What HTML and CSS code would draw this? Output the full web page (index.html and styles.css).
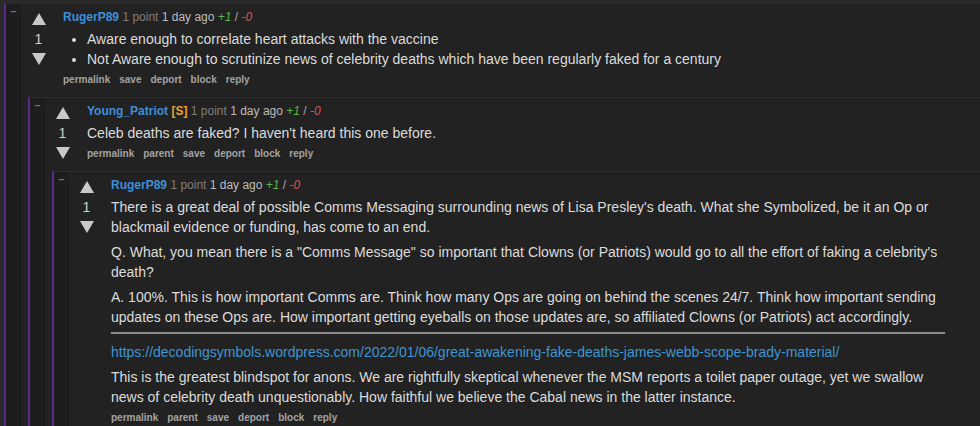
FILE: index.html
```html
<!DOCTYPE html>
<html>
<head>
<meta charset="utf-8">
<link rel="stylesheet" href="styles.css">
</head>
<body>
<div class="comment">
  <div class="gutter"><span class="collapse">–</span></div>
  <div class="main">
    <div class="row">
      <div class="vote"><span class="up"></span><span class="score">1</span><span class="down"></span></div>
      <div class="entry">
        <div class="tagline"><span class="author">RugerP89</span> <span class="points">1 point</span> <span class="time">1 day ago</span> <span class="plus">+1</span> <span class="slash">/</span> <span class="minus">-0</span></div>
        <div class="md">
          <ul>
            <li>Aware enough to correlate heart attacks with the vaccine</li>
            <li>Not Aware enough to scrutinize news of celebrity deaths which have been regularly faked for a century</li>
          </ul>
        </div>
        <div class="actions"><span>permalink</span><span>save</span><span>deport</span><span>block</span><span>reply</span></div>
      </div>
    </div>
    <div class="children">
      <div class="comment">
        <div class="gutter"><span class="collapse">–</span></div>
        <div class="main">
          <div class="row">
            <div class="vote"><span class="up"></span><span class="score">1</span><span class="down"></span></div>
            <div class="entry">
              <div class="tagline"><span class="author">Young_Patriot</span> <span class="submitter">[S]</span> <span class="points">1 point</span> <span class="time">1 day ago</span> <span class="plus">+1</span> <span class="slash">/</span> <span class="minus">-0</span></div>
              <div class="md">
                <p>Celeb deaths are faked? I haven't heard this one before.</p>
              </div>
              <div class="actions"><span>permalink</span><span>parent</span><span>save</span><span>deport</span><span>block</span><span>reply</span></div>
            </div>
          </div>
          <div class="children">
            <div class="comment">
              <div class="gutter"><span class="collapse">–</span></div>
              <div class="main">
                <div class="row">
                  <div class="vote"><span class="up"></span><span class="score">1</span><span class="down"></span></div>
                  <div class="entry">
                    <div class="tagline"><span class="author">RugerP89</span> <span class="points">1 point</span> <span class="time">1 day ago</span> <span class="plus">+1</span> <span class="slash">/</span> <span class="minus">-0</span></div>
                    <div class="md">
                      <p>There is a great deal of possible Comms Messaging surrounding news of Lisa Presley's death. What she Symbolized, be it an Op or blackmail evidence or funding, has come to an end.</p>
                      <p>Q. What, you mean there is a "Comms Message" so important that Clowns (or Patriots) would go to all the effort of faking a celebrity's death?</p>
                      <p>A. 100%. This is how important Comms are. Think how many Ops are going on behind the scenes 24/7. Think how important sending updates on these Ops are. How important getting eyeballs on those updates are, so affiliated Clowns (or Patriots) act accordingly.</p>
                      <hr>
                      <p><a class="link">https://decodingsymbols.wordpress.com/2022/01/06/great-awakening-fake-deaths-james-webb-scope-brady-material/</a></p>
                      <p>This is the greatest blindspot for anons. We are rightfully skeptical whenever the MSM reports a toilet paper outage, yet we swallow news of celebrity death unquestionably. How faithful we believe the Cabal news in the latter instance.</p>
                    </div>
                    <div class="actions"><span>permalink</span><span>parent</span><span>save</span><span>deport</span><span>block</span><span>reply</span></div>
                  </div>
                </div>
              </div>
            </div>
          </div>
        </div>
      </div>
    </div>
  </div>
</div>
</body>
</html>
```
FILE: styles.css
```css
html, body {
  margin: 0;
  background: #2a2a2a;
}
body {
  padding: 3px 0 0 4px;
  font-family: "Liberation Sans", Arial, sans-serif;
  color: #dcdcdc;
  overflow: hidden;
  height: 426px;
  box-sizing: border-box;
}
.comment {
  display: flex;
  border-top: 1px solid #30283f;
  border-left: 2px solid #58298a;
  background: #222222;
}
.gutter {
  width: 15px;
  flex: none;
  background: #1d1d1d;
  display: flex;
  justify-content: center;
}
.collapse {
  font-size: 11px;
  line-height: 11px;
  font-weight: bold;
  color: #5a7ba8;
  margin-top: 2px;
}
.main {
  flex: 1;
  min-width: 0;
}
.row {
  display: flex;
  gap: 7px;
}
.vote {
  width: 35px;
  flex: none;
  display: flex;
  flex-direction: column;
  align-items: center;
  padding-top: 9px;
}
.up, .down {
  width: 0;
  height: 0;
  border-left: 7px solid transparent;
  border-right: 7px solid transparent;
}
.up {
  border-bottom: 12px solid #c9c9c9;
  margin-bottom: 6px;
}
.down {
  border-top: 12px solid #c9c9c9;
  margin-top: 6px;
}
.score {
  font-size: 14px;
  line-height: 16px;
  color: #cfcfcf;
}
.entry {
  flex: 1;
  min-width: 0;
  padding-top: 5px;
}
.tagline {
  font-size: 12px;
  line-height: 16px;
  white-space: nowrap;
}
.author {
  font-weight: bold;
  color: #3e8fd8;
}
.submitter {
  font-weight: bold;
  color: #e6a23a;
}
.points {
  color: #7e7e7e;
}
.time {
  color: #bcbcbc;
}
.plus {
  font-style: italic;
  color: #56b84a;
}
.slash {
  color: #aaaaaa;
}
.minus {
  font-style: italic;
  color: #d9534f;
}
.md {
  margin-top: 4px;
  font-size: 14px;
  line-height: 20px;
  max-width: 834px;
}
.md ul {
  margin: 0;
  padding-left: 24px;
}
.md p {
  margin: 0 0 5px;
}
.md p:last-child {
  margin-bottom: 0;
}
.md hr {
  border: 0;
  height: 2px;
  background: #8c8c8c;
  margin: 0 0 8px;
}
.link {
  color: #3f95d4;
}
.actions {
  margin-top: 3px;
  display: flex;
  gap: 9px;
  font-size: 10px;
  line-height: 16px;
  font-weight: bold;
  color: #a3a3a3;
}
.children {
  margin-top: 9px;
  margin-left: 7px;
}
```
